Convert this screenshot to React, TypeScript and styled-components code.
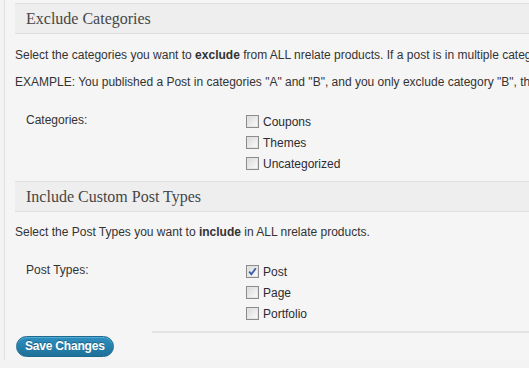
import React from "react";
import styled, { createGlobalStyle } from "styled-components";

const Global = createGlobalStyle`
  html, body { margin: 0; padding: 0; background: #f3f3f3; }
  body { font-family: "Liberation Sans", Arial, sans-serif; font-size: 12px; color: #333; overflow: hidden; }
`;

const Page = styled.div`
  margin-left: 4px;
  border-left: 1px solid #e1e1e1;
  background: #f5f5f5;
  height: 360px;
  box-sizing: border-box;
  padding: 3px 0 0 10px;
  overflow: hidden;
`;

const Heading = styled.h3`
  margin: 0;
  height: 29px;
  line-height: 29px;
  border-top: 1px solid #e0e0e0;
  border-bottom: 1px solid #dedede;
  background: #eeeeee;
  padding-left: 11px;
  font-family: "Liberation Serif", Georgia, serif;
  font-size: 16px;
  font-weight: normal;
  color: #464646;
  white-space: nowrap;
`;

const Para = styled.p<{ $top: number }>`
  margin: ${(p) => p.$top}px 0 0;
  line-height: 17px;
  white-space: nowrap;
  color: #333;
`;

const FormTable = styled.div<{ $top: number; $bottom: number }>`
  display: flex;
  margin-top: ${(p) => p.$top}px;
  padding-bottom: ${(p) => p.$bottom}px;
`;

const FieldLabel = styled.div`
  width: 220px;
  padding-left: 11px;
  line-height: 17px;
  padding-top: 1px;
  color: #333;
`;

const Options = styled.div`
  display: flex;
  flex-direction: column;
`;

const Option = styled.label`
  display: flex;
  align-items: center;
  height: 21px;
  gap: 4px;
  color: #2b2b33;
`;

const Box = styled.span`
  width: 13px;
  height: 13px;
  box-sizing: border-box;
  border: 1px solid #8c8c8c;
  box-shadow: inset 0 0 0 1px #e4e4e4;
  background: linear-gradient(135deg, #d8d8d8 0%, #f2f2f2 70%, #fbfbfb 100%);
  display: flex;
  align-items: center;
  justify-content: center;
`;

const Divider = styled.div`
  margin-left: 137px;
  margin-top: 7px;
  border-top: 2px solid #e2e2e2;
  height: 0;
`;

const SaveButton = styled.button`
  margin-top: 3px;
  margin-left: 1px;
  height: 21px;
  padding: 0 8px;
  border: 1px solid #1e6a8f;
  border-radius: 11px;
  background: linear-gradient(to bottom, #2e8fbf 0%, #2580ad 50%, #1f7199 100%);
  color: #fff;
  font-family: "Liberation Sans", Arial, sans-serif;
  font-weight: bold;
  font-size: 12px;
  line-height: 19px;
  letter-spacing: -0.2px;
  text-shadow: 0 -1px 0 rgba(0, 0, 0, 0.3);
  box-shadow: inset 0 1px 0 rgba(120, 200, 235, 0.5);
`;

const Check = () => (
  <svg width="9" height="9" viewBox="0 0 9 9">
    <path d="M1.2 4.6 L3.4 7.2 L7.8 1.2" fill="none" stroke="#3b5fa8" strokeWidth="1.9" />
  </svg>
);

const CheckItem = ({ label, checked }: { label: string; checked?: boolean }) => (
  <Option>
    <Box>{checked && <Check />}</Box>
    {label}
  </Option>
);

export default function App() {
  return (
    <>
      <Global />
      <Page>
        <Heading>Exclude Categories</Heading>
        <Para $top={13}>
          Select the categories you want to <b>exclude</b> from ALL nrelate products. If a post is in multiple categories, it will still be shown
        </Para>
        <Para $top={10}>
          EXAMPLE: You published a Post in categories "A" and "B", and you only exclude category "B", the post will still show
        </Para>
        <FormTable $top={20} $bottom={7}>
          <FieldLabel>Categories:</FieldLabel>
          <Options>
            <CheckItem label="Coupons" />
            <CheckItem label="Themes" />
            <CheckItem label="Uncategorized" />
          </Options>
        </FormTable>
        <Heading>Include Custom Post Types</Heading>
        <Para $top={12}>
          Select the Post Types you want to <b>include</b> in ALL nrelate products.
        </Para>
        <FormTable $top={20} $bottom={0}>
          <FieldLabel>Post Types:</FieldLabel>
          <Options>
            <CheckItem label="Post" checked />
            <CheckItem label="Page" />
            <CheckItem label="Portfolio" />
          </Options>
        </FormTable>
        <Divider />
        <SaveButton>Save Changes</SaveButton>
      </Page>
    </>
  );
}
